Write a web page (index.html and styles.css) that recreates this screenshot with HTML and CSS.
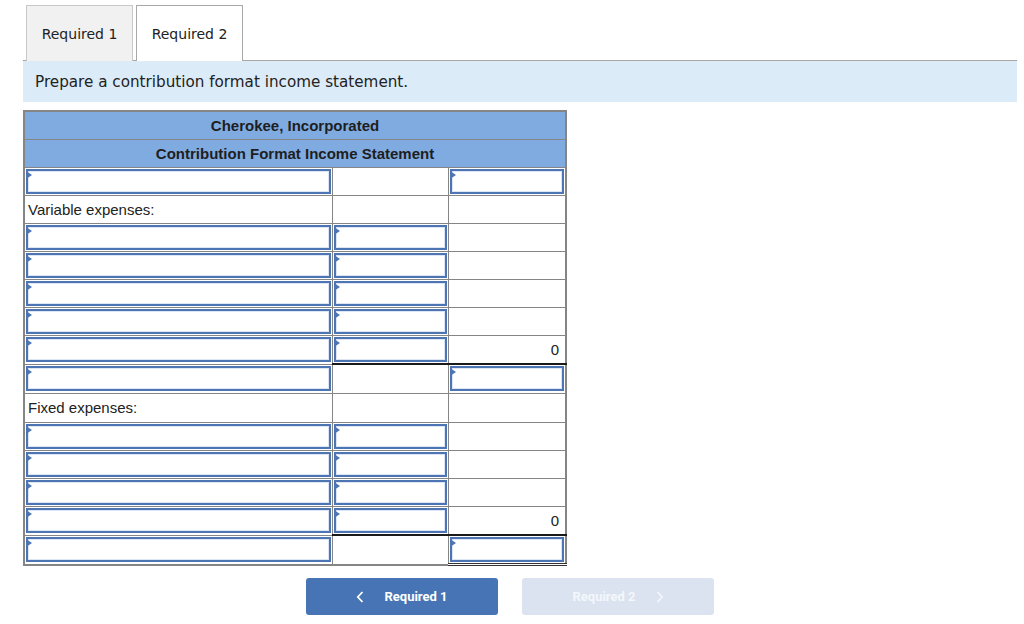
FILE: index.html
```html
<!DOCTYPE html>
<html>
<head>
<meta charset="utf-8">
<link rel="stylesheet" href="styles.css">
</head>
<body>
<div class="page">
  <div class="tabs">
    <div class="tab">Required 1</div>
    <div class="tab active">Required 2</div>
  </div>
  <div class="instr">Prepare a contribution format income statement.</div>
  <table class="stmt">
    <colgroup><col class="c1"><col class="c2"><col class="c3"></colgroup>
    <tr class="hd"><th colspan="3">Cherokee, Incorporated</th></tr>
    <tr class="hd"><th colspan="3">Contribution Format Income Statement</th></tr>
    <tr><td class="in"><div class="box"></div></td><td></td><td class="in"><div class="box"></div></td></tr>
    <tr><td class="lbl">Variable expenses:</td><td></td><td></td></tr>
    <tr><td class="in"><div class="box"></div></td><td class="in"><div class="box"></div></td><td></td></tr>
    <tr><td class="in"><div class="box"></div></td><td class="in"><div class="box"></div></td><td></td></tr>
    <tr><td class="in"><div class="box"></div></td><td class="in"><div class="box"></div></td><td></td></tr>
    <tr><td class="in"><div class="box"></div></td><td class="in"><div class="box"></div></td><td></td></tr>
    <tr><td class="in"><div class="box"></div></td><td class="in"><div class="box"></div></td><td class="num">0</td></tr>
    <tr class="total"><td class="in"><div class="box"></div></td><td></td><td class="in"><div class="box"></div></td></tr>
    <tr class="tall"><td class="lbl">Fixed expenses:</td><td></td><td></td></tr>
    <tr><td class="in"><div class="box"></div></td><td class="in"><div class="box"></div></td><td></td></tr>
    <tr><td class="in"><div class="box"></div></td><td class="in"><div class="box"></div></td><td></td></tr>
    <tr><td class="in"><div class="box"></div></td><td class="in"><div class="box"></div></td><td></td></tr>
    <tr class="tall"><td class="in"><div class="box"></div></td><td class="in"><div class="box"></div></td><td class="num">0</td></tr>
    <tr class="total last"><td class="in"><div class="box"></div></td><td></td><td class="in dbl"><div class="box"></div></td></tr>
  </table>
  <div class="nav">
    <button class="btn prev"><svg class="chev" width="8" height="12" viewBox="0 0 8 12"><path d="M6.5 1 L1.8 6 L6.5 11" fill="none" stroke="#fff" stroke-width="1.8"/></svg>Required 1</button>
    <button class="btn next">Required 2<svg class="chev" width="8" height="12" viewBox="0 0 8 12"><path d="M1.5 1 L6.2 6 L1.5 11" fill="none" stroke="#f4f7fb" stroke-width="1.8"/></svg></button>
  </div>
</div>
</body>
</html>
```
FILE: styles.css
```css
html, body { margin: 0; padding: 0; background: #fff; }
body { font-family: "DejaVu Sans", Verdana, sans-serif; color: #222; }
.page { margin-left: 23px; width: 994px; padding-top: 5px; }
.tabs { display: flex; gap: 3px; padding-left: 3px; border-bottom: 1px solid #a8a8a8; height: 55px; }
.tab { width: 107px; box-sizing: border-box; height: 56px; border: 1px solid #c8c8c8; border-bottom: none; background: #f1f1f1; display: flex; align-items: center; justify-content: center; font-size: 14px; color: #222; }
.tab.active { background: #fff; border-color: #a8a8a8; position: relative; z-index: 1; }
.instr { background: #dcebf8; height: 41px; box-sizing: border-box; padding-left: 12px; padding-top: 1px; display: flex; align-items: center; font-size: 15.2px; color: #222; }
.stmt { margin-top: 8px; border-collapse: collapse; table-layout: fixed; width: 542px; font-family: "Liberation Sans", Arial, sans-serif; font-size: 15px; border: 2px solid #858585; }
.c1 { width: 308px; }
.c2 { width: 116px; }
.c3 { width: 118px; }
.stmt tr { height: 28px; }
.stmt tr.tall, .stmt tr.total { height: 29px; }
.stmt th { background: #80abe1; height: 27px; font-weight: bold; font-size: 15px; color: #1e1e1e; border-bottom: 1px solid #858585; padding: 0; }
.stmt td { border: 1px solid #858585; padding: 0; }
.stmt td.lbl { padding-left: 3px; color: #222; }
.stmt td.num { text-align: right; padding-right: 6px; color: #222; }
.stmt td.in { padding: 1px; }
.box { position: relative; height: 25px; border: 2px solid #4d75b3; box-shadow: inset 0 0 0 1px #dbe5f4; box-sizing: border-box; background: #fff; }
.box::before { content: ""; position: absolute; left: -2px; top: 0px; border-left: 6px solid #4d75b3; border-top: 4px solid transparent; border-bottom: 4px solid transparent; }
.stmt tr.total td { border-top: 2px solid #1a1a1a; }
.stmt tr.total td:first-child { border-top: 1px solid #858585; }
.stmt tr.last td.dbl { border-bottom: 3px double #333; }
.nav { display: flex; gap: 24px; padding-left: 283px; margin-top: 12px; }
.btn { width: 192px; height: 37px; border: none; border-radius: 3px; font-family: Roboto, "Noto Sans", sans-serif; font-weight: bold; font-size: 13px; color: #fff; display: flex; align-items: center; justify-content: center; padding: 0; }
.btn.prev { background: #4674b4; }
.btn.next { background: #dae3ef; color: #f4f7fb; }
.prev .chev { margin-right: 20px; }
.next .chev { margin-left: 20px; }
```
